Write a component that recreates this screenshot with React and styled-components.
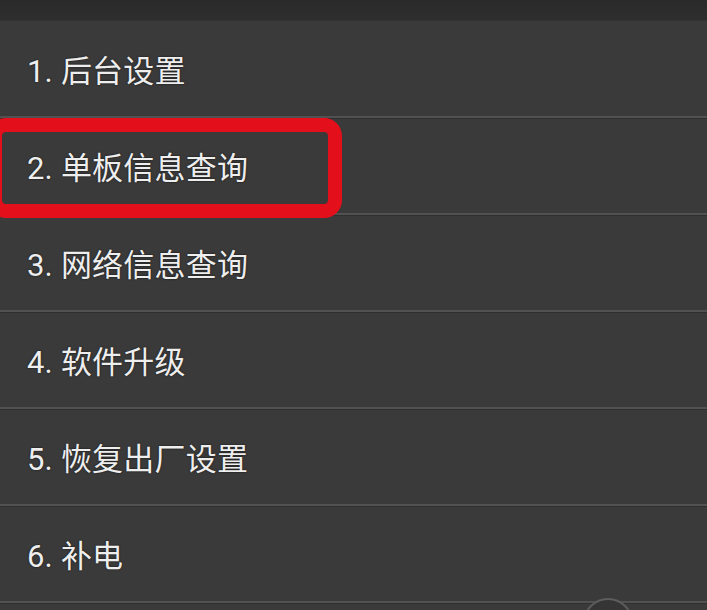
import React from 'react';
import styled, { createGlobalStyle } from 'styled-components';

const GlobalStyle = createGlobalStyle`
  html, body {
    margin: 0;
    padding: 0;
    background: #3a3a3a;
    overflow: hidden;
  }
`

const Screen = styled.div`
  position: relative;
  width: 707px;
  height: 610px;
  overflow: hidden;
  background-color: #3a3a3a;
  font-family: Roboto, "Noto Sans CJK SC", sans-serif;
`

const TopBar = styled.div`
  height: 20px;
  background: linear-gradient(#2a2a2a, #2e2e2e);
  border-bottom: 1px solid #333;
`

const MenuList = styled.ul`
  list-style: none;
  margin: 0;
  padding: 0;
`

const MenuRow = styled.li`
  display: flex;
  align-items: center;
  height: 95px;
  padding-left: 27px;
  border-bottom: 2px solid #515151;
  box-shadow: 0 1px 0 #2f2f2f;
  color: #eeeeee;
  font-size: 31px;
  letter-spacing: 0.2px;
  text-shadow: 0 0 2px rgba(0,0,0,0.8);
`

const Highlight = styled.div`
  position: absolute;
  left: -12px;
  top: 118px;
  width: 354px;
  height: 100px;
  box-sizing: border-box;
  border: 14px solid #e3101c;
  border-radius: 18px;
`

const FloatButton = styled.div`
  position: absolute;
  left: 583px;
  top: 598px;
  width: 50px;
  height: 50px;
  box-sizing: border-box;
  border: 2px solid #5c5c5c;
  border-radius: 50%;
  background: #353535;
`

const items = [
  '1. 后台设置',
  '2. 单板信息查询',
  '3. 网络信息查询',
  '4. 软件升级',
  '5. 恢复出厂设置',
  '6. 补电',
];

export default function App() {
  return (
    <Screen>
      <GlobalStyle />
      <TopBar />
      <MenuList>
        {items.map((label) => (
          <MenuRow key={label}>{label}</MenuRow>
        ))}
      </MenuList>
      <Highlight />
      <FloatButton />
    </Screen>
  )
}
